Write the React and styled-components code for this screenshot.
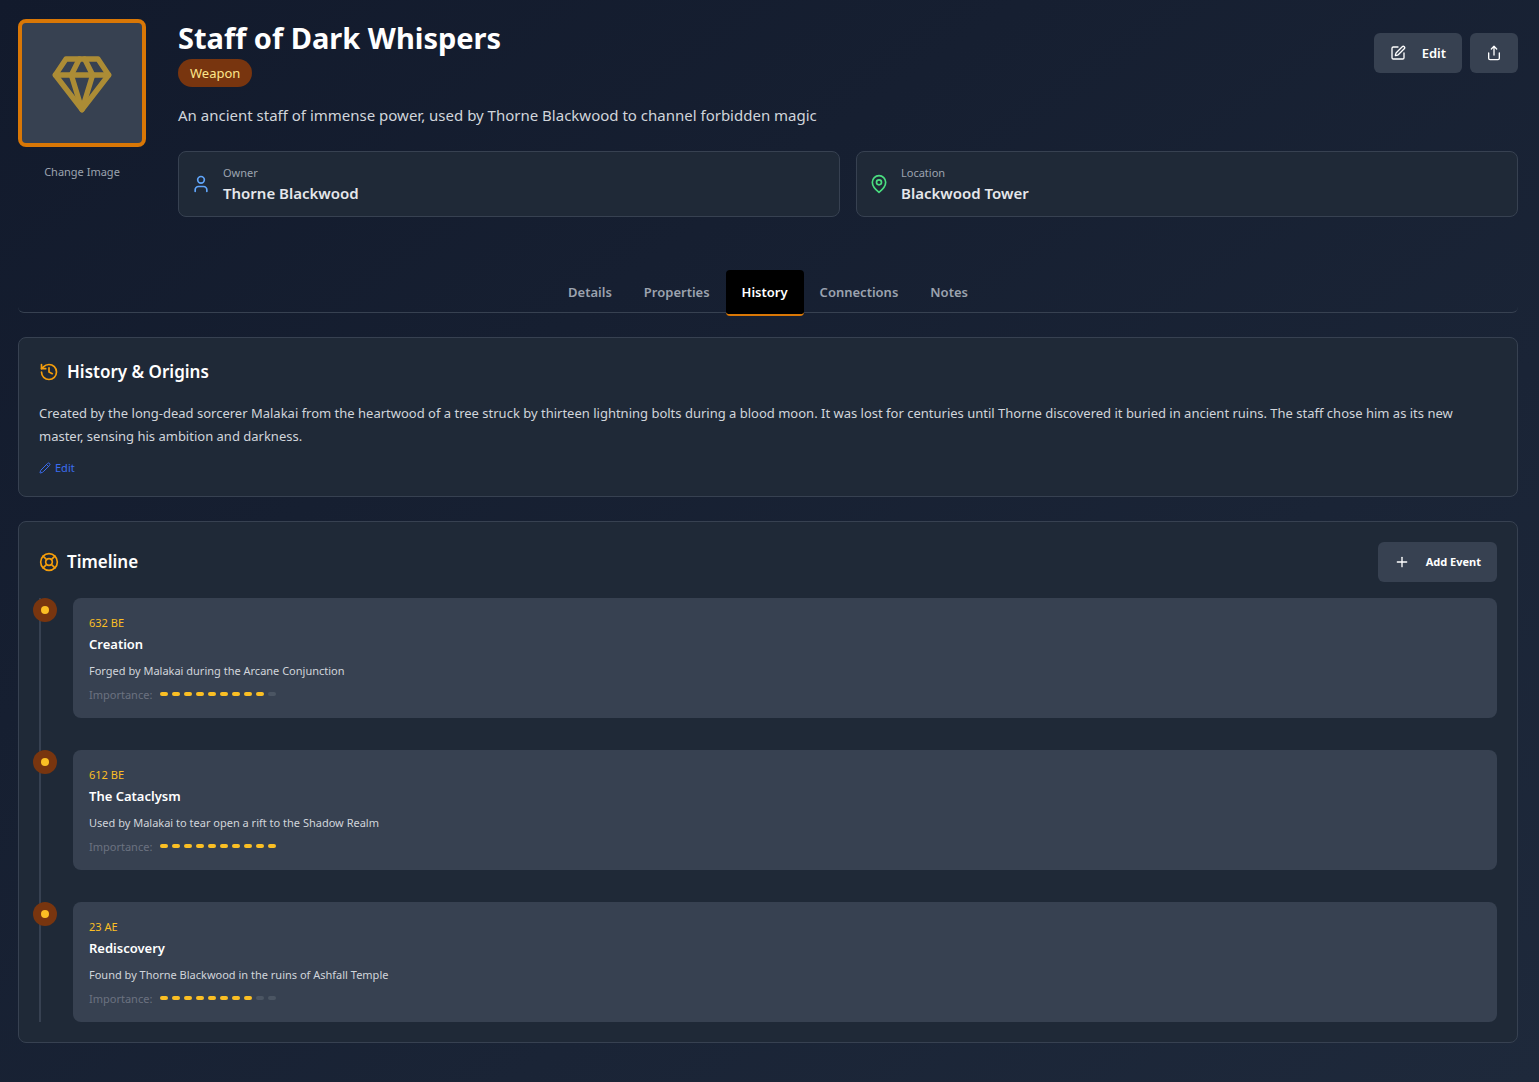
import React from 'react';
import styled, { createGlobalStyle, css } from 'styled-components';
import { User, SquarePen, Share, History, LifeBuoy, Pencil, Plus } from 'lucide-react';

const GlobalStyle = createGlobalStyle`
  *, *::before, *::after { box-sizing: border-box; }
  body {
    margin: 0;
    background: #111827;
    color: #fff;
    font-family: "Segoe UI", "Noto Sans", "Open Sans", sans-serif;
    font-size: 14px;
    line-height: 20px;
  }
  h1, h2, h3, p, dl, dd, ol { margin: 0; padding: 0; }
  button { font: inherit; color: inherit; border: 0; background: none; padding: 0; cursor: pointer; }
`;

const Page = styled.main`
  min-height: 100vh;
  padding: 19px 21px 38px 18px;
  background: linear-gradient(to bottom right, #121a2c, #1e293b);
`;

const Header = styled.header`
  display: flex;
  gap: 32px;
`;

const ImageColumn = styled.div`
  display: flex;
  flex-direction: column;
  align-items: center;
  gap: 16px;
`;

const ItemImage = styled.div`
  display: grid;
  place-items: center;
  width: 128px;
  height: 128px;
  border: 4px solid #d97706;
  border-radius: 8px;
  background: #374151;
  color: #fbbf24;

  svg { opacity: 0.6; }
`;

const ChangeImage = styled.button`
  color: #9ca3af;
  font-size: 11px;
  line-height: 18px;
`;

const Summary = styled.div`
  flex: 1;
  min-width: 0;
`;

const TitleRow = styled.div`
  display: flex;
  justify-content: space-between;
  align-items: center;
`;

const Title = styled.h1`
  font-size: 29px;
  line-height: 38px;
  padding-bottom: 2px;
  font-weight: 700;
`;

const Badge = styled.span`
  display: inline-block;
  padding: 4px 12px;
  border-radius: 14px;
  background: #78350f;
  color: #fde68a;
  font-size: 13px;
  line-height: 20px;
`;

const Actions = styled.div`
  display: flex;
  gap: 8px;
`;

const Button = styled.button`
  display: flex;
  align-items: center;
  gap: 16px;
  height: 40px;
  padding: 0 16px;
  border-radius: 6px;
  background: #374151;
  font-size: ${(p) => (p.$small ? 11 : 13)}px;
  font-weight: ${(p) => (p.$small ? 700 : 600)};
`;

const Description = styled.p`
  margin-top: 16px;
  color: #d1d5db;
  font-size: 15px;
  line-height: 24px;
`;

const Facts = styled.dl`
  display: grid;
  grid-template-columns: 1fr 1fr;
  gap: 16px;
  margin-top: 24px;
`;

const panel = css`
  border: 1px solid #374151;
  border-radius: 8px;
  background: #1f2937;
`;

const Fact = styled.div`
  ${panel}
  display: flex;
  align-items: center;
  gap: 12px;
  padding: 12px;

  svg { color: ${(p) => p.$color}; }
  dt { color: #9ca3af; font-size: 11px; line-height: 18px; }
  dd { color: #e5e7eb; font-size: 15px; line-height: 22px; font-weight: 600; }
`;

const Tabs = styled.nav`
  display: flex;
  justify-content: center;
  height: 43px;
  margin: 53px 0 24px;
  border-bottom: 1px solid #374151;
  border-radius: 6px;
`;

const Tab = styled.button`
  height: 46px;
  padding: 0 16px;
  border-bottom: 2px solid ${(p) => (p.$active ? '#d97706' : 'transparent')};
  border-radius: 4px;
  background: ${(p) => (p.$active ? '#000' : 'transparent')};
  color: ${(p) => (p.$active ? '#fff' : '#9ca3af')};
  font-size: 13px;
  font-weight: 600;
`;

const Section = styled.section`
  ${panel}
  padding: 20px;

  & + & { margin-top: 24px; }
`;

const SectionHead = styled.div`
  display: flex;
  justify-content: space-between;
  align-items: center;
`;

const Heading = styled.h2`
  display: flex;
  align-items: center;
  gap: 8px;
  font-size: 17px;
  line-height: 28px;
  font-weight: 600;

  svg { color: #f59e0b; }
`;

const Story = styled.p`
  margin: 16px 0 12px;
  color: #d1d5db;
  font-size: 13px;
  line-height: 23px;
`;

const TextButton = styled.button`
  display: flex;
  align-items: center;
  gap: 4px;
  color: #3b6df0;
  font-size: 11px;
  line-height: 16px;
`;

const Events = styled.ol`
  display: flex;
  flex-direction: column;
  gap: 32px;
  margin-top: 16px;
  border-left: 2px solid #374151;
  list-style: none;
`;

const Event = styled.li`
  position: relative;
  margin-left: 32px;
  padding: 16px 16px 14px;
  border-radius: 8px;
  background: #374151;
`;

const Marker = styled.span`
  position: absolute;
  top: 0;
  left: -40px;
  display: grid;
  place-items: center;
  width: 24px;
  height: 24px;
  border-radius: 50%;
  background: #78350f;

  &::after {
    content: '';
    width: 8px;
    height: 8px;
    border-radius: 50%;
    background: #fbbf24;
  }
`;

const EventDate = styled.p`
  color: #fbbf24;
  font-size: 11px;
  line-height: 18px;
`;

const EventTitle = styled.h3`
  margin-top: 2px;
  font-size: 13px;
  line-height: 20px;
  font-weight: 600;
`;

const EventText = styled.p`
  margin: 8px 0 6px;
  color: #d1d5db;
  font-size: 11px;
  line-height: 18px;
`;

const Importance = styled.div`
  display: flex;
  gap: 8px;
  color: #6b7280;
  font-size: 11px;
  line-height: 18px;
`;

const Pips = styled.span`
  display: flex;
  gap: 4px;
  padding-top: 6px;
`;

const Pip = styled.span`
  width: 8px;
  height: 4px;
  border-radius: 2px;
  background: ${(p) => (p.$on ? '#fbbf24' : '#4b5563')};
`;

const Glyph = ({ size, children }) => (
  <svg
    width={size}
    height={size}
    viewBox="0 0 24 24"
    fill="none"
    stroke="currentColor"
    strokeWidth="2"
    strokeLinecap="round"
    strokeLinejoin="round"
    aria-hidden="true"
  >
    {children}
  </svg>
);

const GemIcon = () => (
  <Glyph size={64}>
    <path d="M6 3h12l4 6-10 13L2 9Z" />
    <path d="M11 3 8 9l4 13 4-13-3-6" />
    <path d="M2 9h20" />
  </Glyph>
);

const PinIcon = () => (
  <Glyph size={20}>
    <path d="M20 10c0 6-8 12-8 12s-8-6-8-12a8 8 0 0 1 16 0Z" />
    <circle cx="12" cy="10" r="3" />
  </Glyph>
);

const tabs = ['Details', 'Properties', 'History', 'Connections', 'Notes'];

const events = [
  { date: '632 BE', title: 'Creation', text: 'Forged by Malakai during the Arcane Conjunction', importance: 9 },
  { date: '612 BE', title: 'The Cataclysm', text: 'Used by Malakai to tear open a rift to the Shadow Realm', importance: 10 },
  { date: '23 AE', title: 'Rediscovery', text: 'Found by Thorne Blackwood in the ruins of Ashfall Temple', importance: 8 },
];

export default function App() {
  return (
    <>
      <GlobalStyle />
      <Page>
        <Header>
          <ImageColumn>
            <ItemImage><GemIcon /></ItemImage>
            <ChangeImage type="button">Change Image</ChangeImage>
          </ImageColumn>
          <Summary>
            <TitleRow>
              <div>
                <Title>Staff of Dark Whispers</Title>
                <Badge>Weapon</Badge>
              </div>
              <Actions>
                <Button type="button"><SquarePen size={16} />Edit</Button>
                <Button type="button" aria-label="Share"><Share size={16} /></Button>
              </Actions>
            </TitleRow>
            <Description>
              An ancient staff of immense power, used by Thorne Blackwood to channel forbidden magic
            </Description>
            <Facts>
              <Fact $color="#60a5fa">
                <User size={20} />
                <div><dt>Owner</dt><dd>Thorne Blackwood</dd></div>
              </Fact>
              <Fact $color="#4ade80">
                <PinIcon />
                <div><dt>Location</dt><dd>Blackwood Tower</dd></div>
              </Fact>
            </Facts>
          </Summary>
        </Header>

        <Tabs>
          {tabs.map((name) => (
            <Tab key={name} type="button" $active={name === 'History'}>{name}</Tab>
          ))}
        </Tabs>

        <Section>
          <Heading><History size={20} />History &amp; Origins</Heading>
          <Story>
            Created by the long-dead sorcerer Malakai from the heartwood of a tree struck by thirteen lightning
            bolts during a blood moon. It was lost for centuries until Thorne discovered it buried in ancient
            ruins. The staff chose him as its new master, sensing his ambition and darkness.
          </Story>
          <TextButton type="button"><Pencil size={12} />Edit</TextButton>
        </Section>

        <Section>
          <SectionHead>
            <Heading><LifeBuoy size={20} />Timeline</Heading>
            <Button type="button" $small><Plus size={16} />Add Event</Button>
          </SectionHead>
          <Events>
            {events.map((e) => (
              <Event key={e.title}>
                <Marker />
                <EventDate>{e.date}</EventDate>
                <EventTitle>{e.title}</EventTitle>
                <EventText>{e.text}</EventText>
                <Importance>
                  Importance:
                  <Pips>
                    {Array.from({ length: 10 }, (_, i) => <Pip key={i} $on={i < e.importance} />)}
                  </Pips>
                </Importance>
              </Event>
            ))}
          </Events>
        </Section>
      </Page>
    </>
  );
}
